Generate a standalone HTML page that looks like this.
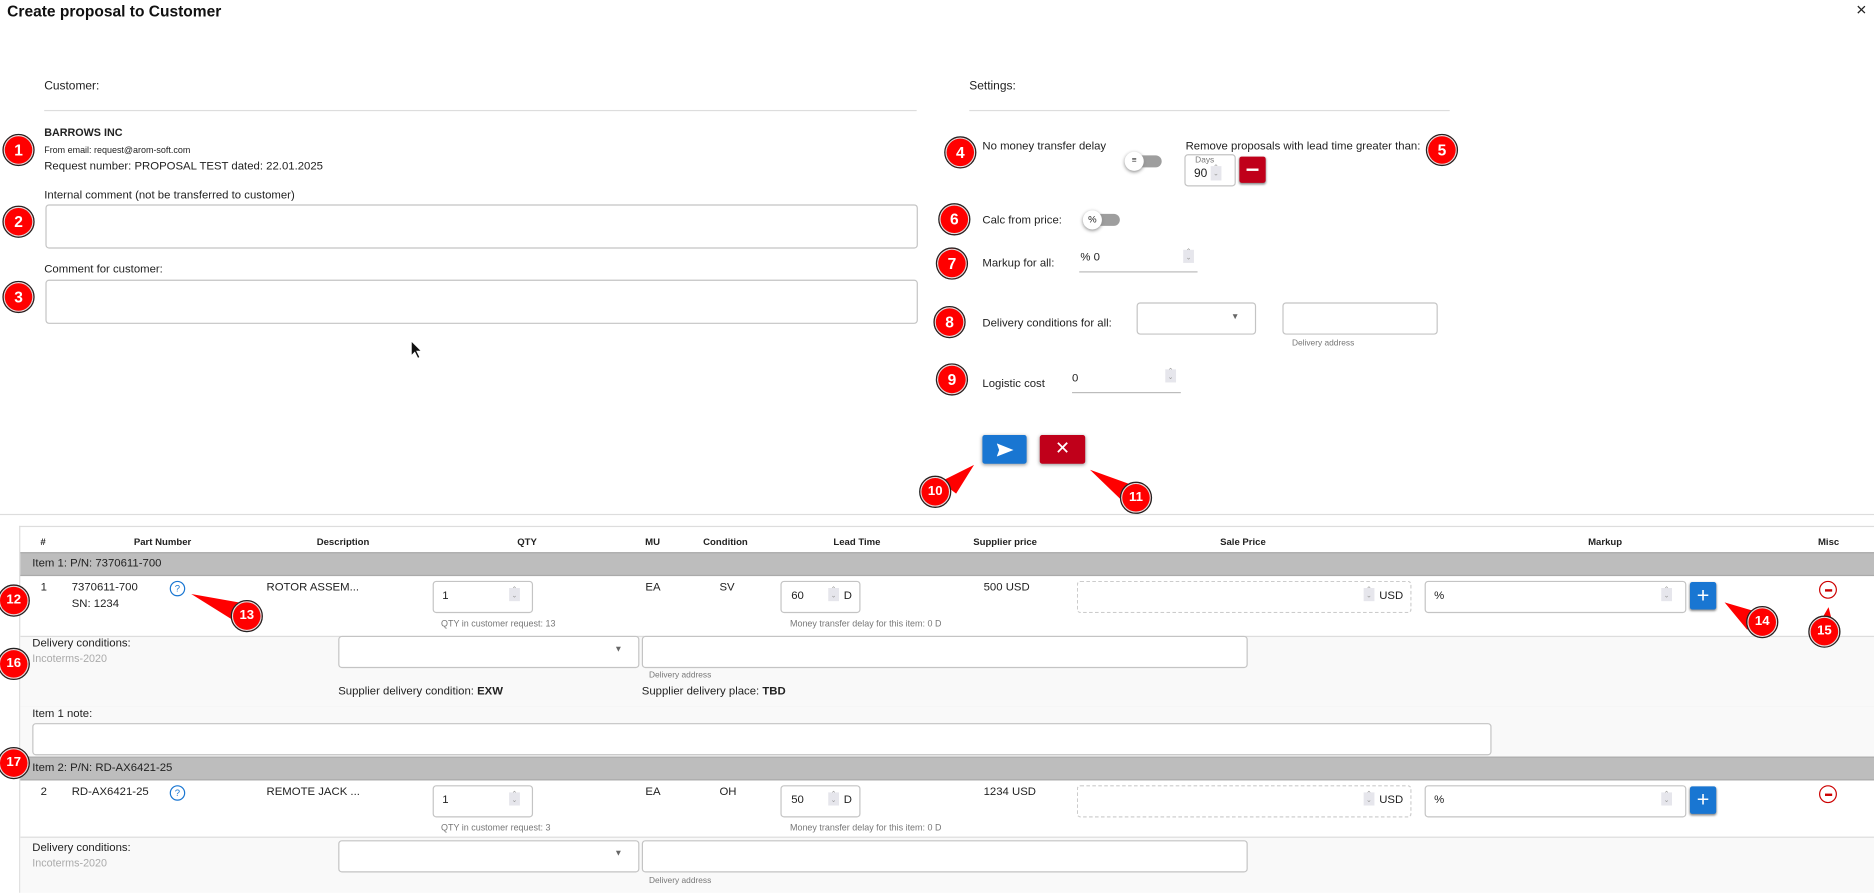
<!DOCTYPE html>
<html><head><meta charset="utf-8"><style>
html,body{margin:0;padding:0;background:#fff;overflow:hidden}
body{width:1874px;height:892px}
#w{position:absolute;left:0;top:0;width:1568px;height:746px;transform:scale(1.19515);transform-origin:0 0;font-family:"Liberation Sans",sans-serif;color:#222;font-size:9.5px}
.a{position:absolute;white-space:nowrap}
.b{position:absolute;width:25px;height:25px;border-radius:50%;background:#f00;border:1.5px solid #222;box-shadow:0 0 0 1px #ddd inset;color:#fff;font-weight:bold;font-size:13px;text-align:center;line-height:25px;margin:-14px 0 0 -14px}
.box{position:absolute;border:1px solid #c4c4c4;border-radius:3px;background:#fff;box-sizing:border-box}
.ul{position:absolute;border-bottom:1px solid #bbb}
.sp{position:absolute;width:9px;height:11px;background:#e6e6ec;color:#999;font-size:6px;line-height:5px;text-align:center}
.hd{position:absolute;top:449px;font-weight:bold;font-size:8px;transform:translateX(-50%)}
.grp{position:absolute;left:17px;width:1551px;height:20px;background:#bdbdbd;border-top:1px solid #aaa;border-bottom:1px solid #aaa;box-sizing:border-box;font-size:9.5px;line-height:18px;padding-left:10px}
.g{color:#777;font-size:7.5px}
.q{position:absolute;width:11px;height:11px;border:1px solid #1976d2;border-radius:50%;color:#1976d2;font-size:8px;text-align:center;line-height:11px}
.plus{position:absolute;width:22px;height:23px;background:#1976d2;border-radius:2px;color:#fff;font-size:18px;text-align:center;line-height:22px;box-shadow:0 1px 2px #888}
.min{position:absolute;width:13px;height:13px;border:1.2px solid #c00;border-radius:50%}
.min:after{content:"";position:absolute;left:3.5px;top:5.5px;width:6px;height:2px;background:#c00}
.tri{position:absolute;width:0;height:0}
</style></head><body><div id="w">
<div class="a" style="left:6px;top:2px;font-size:13px;font-weight:bold;color:#111">Create proposal to Customer</div>
<div class="a" style="left:1553px;top:0px;font-size:15px">×</div>

<div class="a" style="left:37px;top:67px;font-size:10px">Customer:</div>
<div class="ul" style="left:37px;top:92px;width:730px;border-color:#ddd"></div>
<div class="a" style="left:811px;top:67px;font-size:10px">Settings:</div>
<div class="ul" style="left:811px;top:92px;width:402px;border-color:#ddd"></div>

<div class="a" style="left:37px;top:106px;font-weight:bold;font-size:9px">BARROWS INC</div>
<div class="a" style="left:37px;top:121px;font-size:7.5px">From email: request@arom-soft.com</div>
<div class="a" style="left:37px;top:134px;font-size:9.5px">Request number: PROPOSAL TEST dated: 22.01.2025</div>
<div class="a" style="left:37px;top:158px">Internal comment (not be transferred to customer)</div>
<div class="box" style="left:38px;top:171px;width:730px;height:37px"></div>
<div class="a" style="left:37px;top:220px">Comment for customer:</div>
<div class="box" style="left:38px;top:234px;width:730px;height:37px"></div>
<svg class="a" style="left:343px;top:284px" width="12" height="17" viewBox="0 0 12 17"><path d="M1 1 L1 14 L4 11 L6.5 16 L8.5 15 L6 10 L10 10 Z" fill="#111" stroke="#fff" stroke-width="1"/></svg>

<!-- settings -->
<div class="a" style="left:822px;top:117px">No money transfer delay</div>
<div class="a" style="left:946px;top:130px;width:26px;height:10px;border-radius:5px;background:#9e9e9e"></div>
<div class="a" style="left:941px;top:127px;width:16px;height:16px;border-radius:50%;background:#fff;box-shadow:0 1px 3px #888;font-size:7px;text-align:center;line-height:16px">≡</div>
<div class="a" style="left:992px;top:117px">Remove proposals with lead time greater than:</div>
<div class="box" style="left:991px;top:129px;width:43px;height:27px"></div>
<div class="a g" style="left:1000px;top:131px;font-size:7px">Days</div>
<div class="a" style="left:999px;top:140px;font-size:10px">90</div>
<div class="sp" style="left:1013px;top:139px;height:12px">⌃<br>⌄</div>
<div class="a" style="left:1037px;top:131px;width:22px;height:22px;background:#c0001a;border-radius:2px;box-shadow:0 1px 2px #888"><div style="position:absolute;left:6px;top:10px;width:10px;height:2px;background:#fff"></div></div>

<div class="a" style="left:822px;top:179px">Calc from price:</div>
<div class="a" style="left:911px;top:179px;width:26px;height:10px;border-radius:5px;background:#9e9e9e"></div>
<div class="a" style="left:906px;top:176px;width:16px;height:16px;border-radius:50%;background:#fff;box-shadow:0 1px 3px #888;font-size:8px;text-align:center;line-height:16px">%</div>

<div class="a" style="left:822px;top:215px">Markup for all:</div>
<div class="a" style="left:904px;top:210px;font-size:9.5px">% 0</div>
<div class="sp" style="left:990px;top:209px">⌃<br>⌄</div>
<div class="ul" style="left:903px;top:227px;width:99px"></div>

<div class="a" style="left:822px;top:265px">Delivery conditions for all:</div>
<div class="box" style="left:951px;top:253px;width:100px;height:27px"></div>
<div class="a" style="left:1030px;top:262px;font-size:7px;color:#666">▼</div>
<div class="box" style="left:1073px;top:253px;width:130px;height:27px"></div>
<div class="a g" style="left:1081px;top:284px;font-size:7px">Delivery address</div>

<div class="a" style="left:822px;top:316px">Logistic cost</div>
<div class="a" style="left:897px;top:311px">0</div>
<div class="sp" style="left:975px;top:309px">⌃<br>⌄</div>
<div class="ul" style="left:897px;top:328px;width:91px"></div>

<div class="a" style="left:822px;top:364px;width:37px;height:24px;background:#1976d2;border-radius:2px;box-shadow:0 1px 3px #999"><svg style="position:absolute;left:12px;top:7px" width="14" height="11" viewBox="0 0 14 11"><path d="M0 0 L14 5.5 L0 11 L2 5.5 Z" fill="#fff"/></svg></div>
<div class="a" style="left:870px;top:364px;width:38px;height:24px;background:#c0001a;border-radius:2px;box-shadow:0 1px 3px #999;color:#fff;font-size:15px;text-align:center;line-height:24px">✕</div>

<div class="ul" style="left:0;top:430px;width:1568px;border-color:#ddd"></div>

<!-- table -->
<div class="a" style="left:16px;top:440px;width:1552px;height:306px;border-left:1px solid #ddd;border-top:1px solid #ddd"></div>
<div class="hd" style="left:36px">#</div>
<div class="hd" style="left:136px">Part Number</div>
<div class="hd" style="left:287px">Description</div>
<div class="hd" style="left:441px">QTY</div>
<div class="hd" style="left:546px">MU</div>
<div class="hd" style="left:607px">Condition</div>
<div class="hd" style="left:717px">Lead Time</div>
<div class="hd" style="left:841px">Supplier price</div>
<div class="hd" style="left:1040px">Sale Price</div>
<div class="hd" style="left:1343px">Markup</div>
<div class="hd" style="left:1530px">Misc</div>

<div class="grp" style="top:462px">Item 1: P/N: 7370611-700</div>
<div class="grp" style="top:633px">Item 2: P/N: RD-AX6421-25</div>

<!-- row 1 -->
<div class="a" style="left:34px;top:486px">1</div>
<div class="a" style="left:60px;top:486px">7370611-700</div>
<div class="a" style="left:60px;top:500px">SN: 1234</div>
<div class="q" style="left:142px;top:486px">?</div>
<div class="a" style="left:223px;top:486px">ROTOR ASSEM...</div>
<div class="box" style="left:362px;top:486px;width:84px;height:27px"></div>
<div class="a" style="left:370px;top:493px">1</div>
<div class="sp" style="left:426px;top:492px">⌃<br>⌄</div>
<div class="a g" style="left:369px;top:517px">QTY in customer request: 13</div>
<div class="a" style="left:540px;top:486px">EA</div>
<div class="a" style="left:602px;top:486px">SV</div>
<div class="box" style="left:653px;top:486px;width:67px;height:27px"></div>
<div class="a" style="left:662px;top:493px">60</div>
<div class="sp" style="left:693px;top:492px">⌃<br>⌄</div>
<div class="a" style="left:706px;top:493px">D</div>
<div class="a g" style="left:661px;top:517px">Money transfer delay for this item: 0 D</div>
<div class="a" style="left:823px;top:486px">500 USD</div>
<div class="box" style="left:901px;top:486px;width:280px;height:27px;border:1px dashed #ccc"></div>
<div class="sp" style="left:1141px;top:492px">⌃<br>⌄</div>
<div class="a" style="left:1154px;top:493px">USD</div>
<div class="box" style="left:1192px;top:486px;width:219px;height:27px"></div>
<div class="a" style="left:1200px;top:493px">%</div>
<div class="sp" style="left:1390px;top:492px">⌃<br>⌄</div>
<div class="plus" style="left:1414px;top:487px">+</div>
<div class="min" style="left:1522px;top:486px"></div>

<!-- delivery 1 -->
<div class="a" style="left:17px;top:532px;width:1551px;height:58px;background:#f9f9f9;border-top:1px solid #ddd;border-bottom:1px solid #ddd"></div>
<div class="a" style="left:27px;top:533px">Delivery conditions:</div>
<div class="a" style="left:27px;top:546px;color:#aaa;font-size:9px">Incoterms-2020</div>
<div class="box" style="left:283px;top:532px;width:252px;height:27px"></div>
<div class="a" style="left:514px;top:540px;font-size:7px;color:#666">▼</div>
<div class="box" style="left:537px;top:532px;width:507px;height:27px"></div>
<div class="a g" style="left:543px;top:562px;font-size:7px">Delivery address</div>
<div class="a" style="left:283px;top:573px">Supplier delivery condition: <b>EXW</b></div>
<div class="a" style="left:537px;top:573px">Supplier delivery place: <b>TBD</b></div>

<div class="a" style="left:17px;top:591px;width:1551px;height:42px;background:#f9f9f9"></div>
<div class="a" style="left:27px;top:592px">Item 1 note:</div>
<div class="box" style="left:27px;top:605px;width:1221px;height:27px"></div>

<!-- row 2 -->
<div class="a" style="left:34px;top:657px">2</div>
<div class="a" style="left:60px;top:657px">RD-AX6421-25</div>
<div class="q" style="left:142px;top:657px">?</div>
<div class="a" style="left:223px;top:657px">REMOTE JACK ...</div>
<div class="box" style="left:362px;top:657px;width:84px;height:27px"></div>
<div class="a" style="left:370px;top:664px">1</div>
<div class="sp" style="left:426px;top:663px">⌃<br>⌄</div>
<div class="a g" style="left:369px;top:688px">QTY in customer request: 3</div>
<div class="a" style="left:540px;top:657px">EA</div>
<div class="a" style="left:602px;top:657px">OH</div>
<div class="box" style="left:653px;top:657px;width:67px;height:27px"></div>
<div class="a" style="left:662px;top:664px">50</div>
<div class="sp" style="left:693px;top:663px">⌃<br>⌄</div>
<div class="a" style="left:706px;top:664px">D</div>
<div class="a g" style="left:661px;top:688px">Money transfer delay for this item: 0 D</div>
<div class="a" style="left:823px;top:657px">1234 USD</div>
<div class="box" style="left:901px;top:657px;width:280px;height:27px;border:1px dashed #ccc"></div>
<div class="sp" style="left:1141px;top:663px">⌃<br>⌄</div>
<div class="a" style="left:1154px;top:664px">USD</div>
<div class="box" style="left:1192px;top:657px;width:219px;height:27px"></div>
<div class="a" style="left:1200px;top:664px">%</div>
<div class="sp" style="left:1390px;top:663px">⌃<br>⌄</div>
<div class="plus" style="left:1414px;top:658px">+</div>
<div class="min" style="left:1522px;top:657px"></div>

<div class="a" style="left:17px;top:700px;width:1551px;height:46px;background:#f9f9f9;border-top:1px solid #ddd"></div>
<div class="a" style="left:27px;top:704px">Delivery conditions:</div>
<div class="a" style="left:27px;top:717px;color:#aaa;font-size:9px">Incoterms-2020</div>
<div class="box" style="left:283px;top:703px;width:252px;height:27px"></div>
<div class="a" style="left:514px;top:711px;font-size:7px;color:#666">▼</div>
<div class="box" style="left:537px;top:703px;width:507px;height:27px"></div>
<div class="a g" style="left:543px;top:734px;font-size:7px">Delivery address</div>

<!-- pointer triangles -->
<svg class="a" style="left:0;top:0" width="1568" height="746">
<polygon points="815,389 787,403 800,413" fill="#f00"/>
<polygon points="912,393 945,405 940,420" fill="#f00"/>
<polygon points="160,497 205,505 200,522" fill="#f00"/>
<polygon points="1443,504 1470,512 1462,527" fill="#f00"/>
<polygon points="1530,508 1523,520 1533,520" fill="#f00"/>
</svg>

<div class="b" style="left:16px;top:126px">1</div>
<div class="b" style="left:16px;top:186px">2</div>
<div class="b" style="left:16px;top:249px">3</div>
<div class="b" style="left:804px;top:128px">4</div>
<div class="b" style="left:1207px;top:126px">5</div>
<div class="b" style="left:799px;top:184px">6</div>
<div class="b" style="left:797px;top:221px">7</div>
<div class="b" style="left:795px;top:270px">8</div>
<div class="b" style="left:797px;top:318px">9</div>
<div class="b" style="left:783px;top:412px;font-size:11px">10</div>
<div class="b" style="left:951px;top:417px;font-size:11px">11</div>
<div class="b" style="left:12px;top:503px;font-size:11px">12</div>
<div class="b" style="left:207px;top:516px;font-size:11px">13</div>
<div class="b" style="left:1475px;top:521px;font-size:11px">14</div>
<div class="b" style="left:1527px;top:529px;font-size:11px">15</div>
<div class="b" style="left:12px;top:556px;font-size:11px">16</div>
<div class="b" style="left:12px;top:639px;font-size:11px">17</div>
</div></body></html>
